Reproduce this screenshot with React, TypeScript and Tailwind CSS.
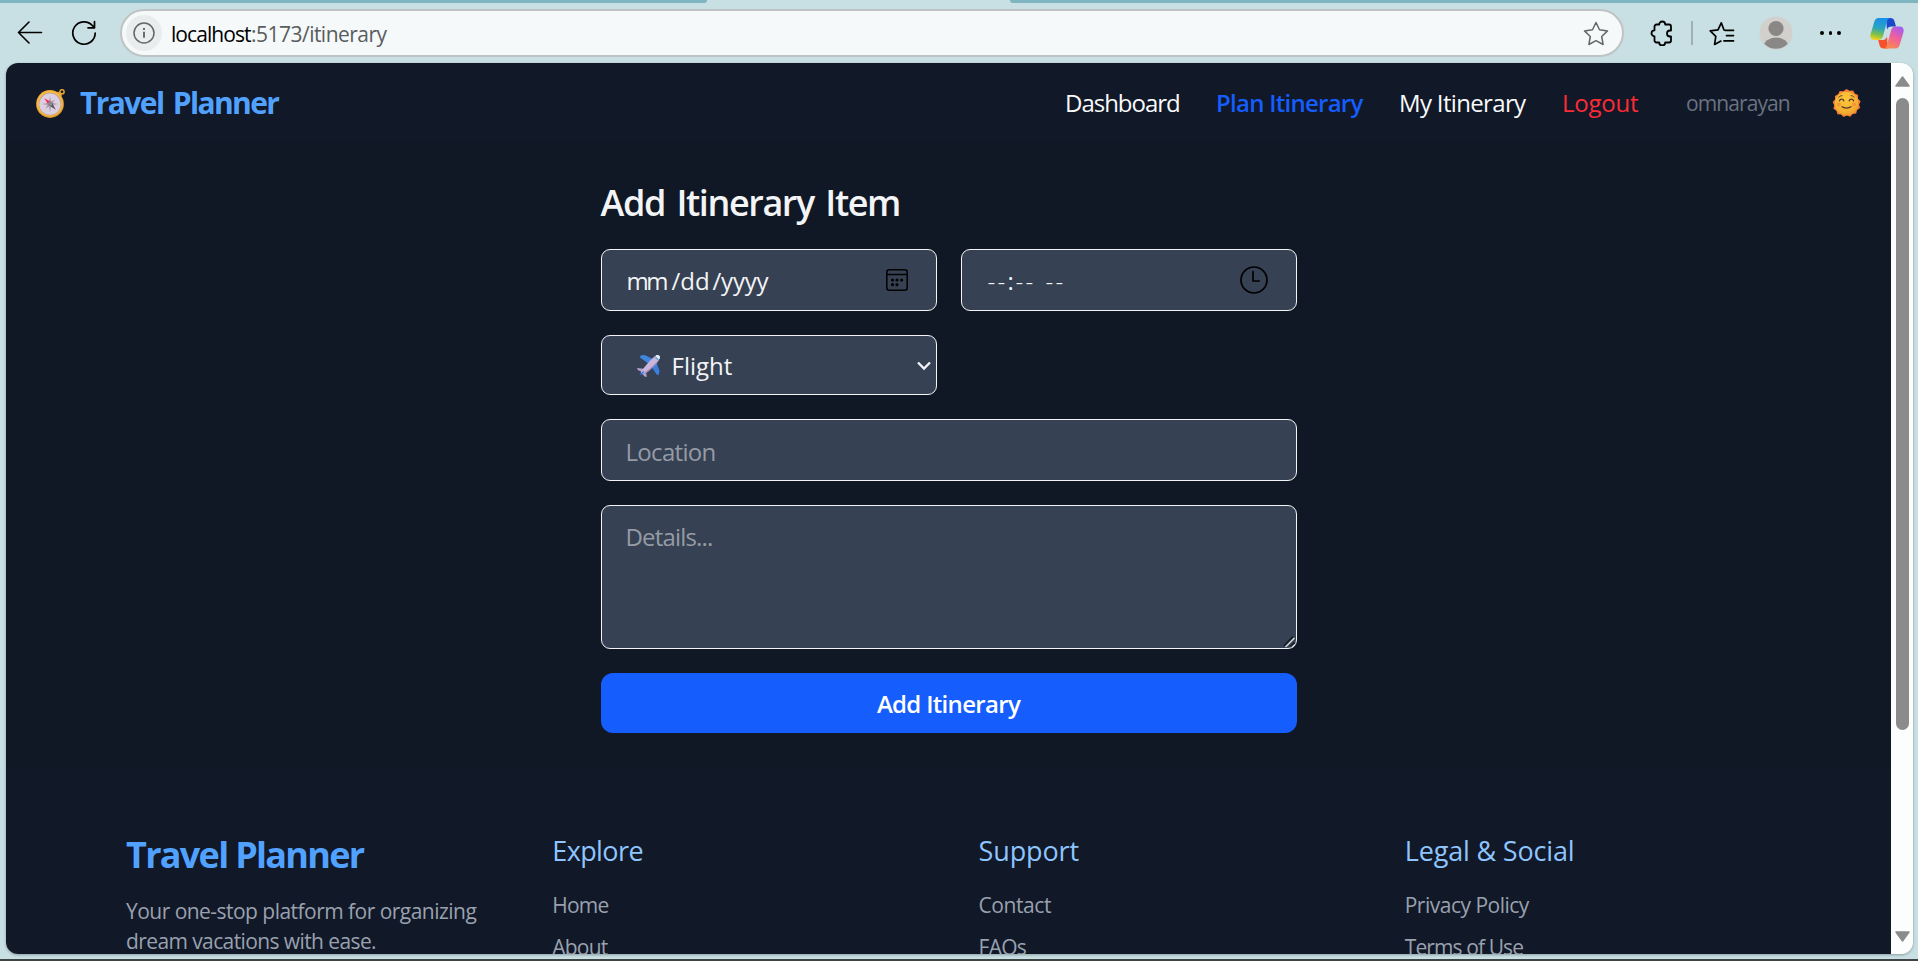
import type { ReactNode } from "react";

function Compass() {
  return (
    <svg viewBox="0 0 29 29" className="mt-px h-[29px] w-[29px] shrink-0">
      <circle cx="26" cy="2.8" r="2.1" fill="none" stroke="#e0a030" strokeWidth="1.6" />
      <path d="M22 4.5l2 2" stroke="#f3b93c" strokeWidth="3.4" strokeLinecap="round" />
      <circle cx="14" cy="15" r="13.9" fill="#e09a35" />
      <circle cx="13.8" cy="14.4" r="13" fill="#f6b93e" />
      <circle cx="14" cy="15" r="11.2" fill="#b9a0a8" />
      <circle cx="14" cy="15.2" r="10.6" fill="#dccfe0" />
      <path d="M14 7.2l1.3 6.5 6.7 1.3-6.7 1.3L14 23l-1.3-6.7L6 15l6.700-1.300z" fill="#a89daa" />
      <path d="M9.500 19.500l3-5.500 6.500-3.500-4 6z" fill="#a89daa" />
      <path d="M8.200 9.200l7.600 4-3 3z" fill="#ef2f62" />
      <path d="M19.800 20.800l-7-4.600 3-3z" fill="#5b525e" />
      <circle cx="14.200" cy="14.800" r="2.300" fill="#8d858f" />
    </svg>
  );
}

function SunFace() {
  return (
    <svg viewBox="0 0 29 29" className="mt-px h-[29px] w-[29px] shrink-0">
      <defs>
        <radialGradient id="sun" cx="0.45" cy="0.3" r="0.75">
          <stop offset="0" stopColor="#fcc83c" />
          <stop offset="0.7" stopColor="#f5b030" />
          <stop offset="1" stopColor="#e89a2c" />
        </radialGradient>
      </defs>
      <path
        d="M14.500 0l3 1.800 3.600-.4 1.700 3 3.300 1.600-.1 3.700 2.600 2.500-1.500 3.200 1 3.500-3 2 -.9 3.600-3.600.4-2.300 2.800-3.400-1.100-3.300 1.400-2.600-2.500-3.600-.3-1-3.500-3-1.900.9-3.500-1.700-3.200 2.500-2.600-.2-3.600 3.200-1.700 1.600-3.200 3.600.3z"
        fill="#f58038"
      />
      <circle cx="14.500" cy="14.500" r="11.800" fill="url(#sun)" />
      <circle cx="6.800" cy="15.500" r="2" fill="#f5933a" />
      <circle cx="22.200" cy="15.500" r="2" fill="#f5933a" />
      <g fill="none" stroke="#54382f" strokeWidth="1.300" strokeLinecap="round">
        <path d="M7.500 11.800c.7-2.200 3.600-2.200 4.300 0M17.200 11.800c.7-2.200 3.600-2.200 4.300 0M10 17.800c2.400 1.700 6.600 1.700 9 0" />
        <path d="M6.800 8.200c.8-1.100 2-1.600 3.200-1.500M19 6.700c1.200-.1 2.400.4 3.200 1.500" strokeWidth="1" />
      </g>
    </svg>
  );
}

function Plane() {
  return (
    <svg viewBox="0 0 24 24" className="h-6 w-6 shrink-0">
      <path d="M3.500 1.500l4-.5 9.500 4.500-5 4.500L3 3.500z" fill="#3f86e0" />
      <path d="M22.500 17l-.7 4-2.200-.5L14 12l5-5z" fill="#3a7ee0" />
      <path d="M0 14l6.500.8 2.500 2.700.8 5.500-2.800-.7-2-4.300L.8 16z" fill="#b79fce" />
      <path d="M19.300 1.200c2-.8 4.500.6 3.400 3.400-1.800 3.800-12 12.800-16.200 15.400-1.800.8-3.300-.6-2.400-2.400C7 13 15.800 3 19.300 1.200z" fill="#cbb5da" />
      <path d="M5.500 19.800c4.300-2.400 14-10.800 16.800-14.600-1.200 4.600-9.800 12-14.600 14.800z" fill="#a58fc0" />
      <path d="M2.800 20.300l3.500-3.400.8 1-3.400 3.400z" fill="#2775e8" />
      <path d="M19.300 1.200c2-.8 4.500.6 3.400 3.400l-1 .3-2.900-2.700z" fill="#e8eef6" />
      <path d="M18.600 2.600l2.900 2.800-1 .7-2.500-2.600z" fill="#35a5e8" />
    </svg>
  );
}

function Copilot() {
  return (
    <svg viewBox="0 0 34 31" className="h-[31px] w-[34px]">
      <defs>
        <linearGradient id="cpA" x1="0.5" y1="0" x2="0.3" y2="1">
          <stop offset="0" stopColor="#1a8fe8" />
          <stop offset="0.45" stopColor="#2aa5c0" />
          <stop offset="0.75" stopColor="#7cc04a" />
          <stop offset="1" stopColor="#f5d21c" />
        </linearGradient>
        <linearGradient id="cpB" x1="0.8" y1="0" x2="0.3" y2="1">
          <stop offset="0" stopColor="#a45cf5" />
          <stop offset="0.5" stopColor="#f0609a" />
          <stop offset="1" stopColor="#fb8a4e" />
        </linearGradient>
        <linearGradient id="cpC" x1="0" y1="0" x2="1" y2="1">
          <stop offset="0" stopColor="#1c50d8" />
          <stop offset="1" stopColor="#1a3fb8" />
        </linearGradient>
      </defs>
      <path d="M16 0h4.500c2 0 3.200 1 3.800 2.800L26 8.500h-4.500c-2.500 0-3.800 1.200-4.500 3.200z" fill="url(#cpC)" />
      <path d="M18 30.500h-4.500c-2 0-3.200-1-3.800-2.800L8.200 22H13c2 0 3.300-1.200 4-3.200z" fill="#f4512c" />
      <path d="M8.500 0H20c-1.800.4-2.500 1.800-3 3.600L13 18c-.8 2.800-2.200 4-4.800 4H4.500C1 22-.4 19.300.7 15.800L4.300 3.800C5 1.300 6.300 0 8.500 0z" fill="url(#cpA)" />
      <path d="M25.500 30.500H14c1.800-.4 2.500-1.800 3-3.600l4-14.400c.8-2.800 2.200-4 4.800-4h3.700c3.500 0 4.900 2.700 3.800 6.200l-3.600 12c-.7 2.500-2 3.800-4.200 3.800z" fill="url(#cpB)" />
    </svg>
  );
}

function Toolbar() {
  return (
    <header className="flex h-[60px] shrink-0 items-center bg-[#c8dfe3] pl-[17px]">
      <svg viewBox="0 0 26 24" className="h-6 w-[26px] shrink-0" fill="none" stroke="#000" strokeWidth="1.6" strokeLinecap="round" strokeLinejoin="round">
        <path d="M24.500 11.500H1.500M12 1L1.500 11.500 12 22" />
      </svg>
      <svg viewBox="0 0 26 26" className="ml-[28px] h-[26px] w-[26px] shrink-0" fill="none" stroke="#000" strokeWidth="1.700" strokeLinecap="round" strokeLinejoin="round">
        <path d="M24.200 13A11.200 11.200 0 1 1 21.500 5.700l2 2.100M23.500 1.500v6.300h-6.500" />
      </svg>
      <div className="ml-[23px] flex h-12 w-[1504px] shrink-0 items-center rounded-full border-2 border-[#bfc3c4] bg-[#f5f9fa] pl-[4px] pr-[13px]">
        <span className="flex h-9 w-9 items-center justify-center rounded-full bg-[#e9eded]">
          <svg viewBox="0 0 22 22" className="h-[22px] w-[22px]" fill="none" stroke="#666" strokeWidth="1.500">
            <circle cx="11" cy="11" r="10" />
            <path d="M11 9.800v6M11 6v2" strokeWidth="1.900" />
          </svg>
        </span>
        <span className="ml-[9px] flex pt-px text-[21px] leading-[30px]">
          <span className="w-[80px] tracking-[-0.93px] text-black">localhost</span>
          <span className="tracking-[-0.52px] text-[#5a5c5e]">:5173/itinerary</span>
        </span>
        <svg viewBox="0 0 26 25" className="ml-auto h-[25px] w-[26px]" fill="none" stroke="#666" strokeWidth="1.500" strokeLinejoin="round">
          <path d="M13 1.500l3.500 7.300 8 1.100-5.800 5.600 1.400 8L13 19.700l-7.100 3.800 1.400-8L1.500 9.900l8-1.100z" />
        </svg>
      </div>
      <svg viewBox="0 0 24 26" className="ml-[26px] h-[26px] w-6 shrink-0" fill="none" stroke="#000" strokeWidth="1.800" strokeLinejoin="round">
        <path d="M6.500 4.500h2.700a3 3 0 0 1 6 0H19a2 2 0 0 1 2 2v4h-1a3 3 0 0 0 0 6h1v4a2 2 0 0 1-2 2h-3.800a3 3 0 0 1-6 0H6.500a2 2 0 0 1-2-2v-4.200a3 3 0 0 1 0-6V6.500a2 2 0 0 1 2-2z" />
      </svg>
      <span className="ml-[17px] h-6 w-[2px] shrink-0 bg-[#9eb0b4]" />
      <svg viewBox="0 0 26 25" className="ml-[16px] h-[25px] w-[26px] shrink-0" fill="none" stroke="#000" strokeWidth="1.700" strokeLinecap="round" strokeLinejoin="round">
        <path d="M16.500 9.300l-1.500-.3L12.300 1.800 9 8.900 1.200 9.900l5.600 5.500L5.600 23.400l6.300-3.300M16.500 9.300h8M17.500 14.600h7M15 19.900h9.500" />
      </svg>
      <svg viewBox="0 0 34 34" className="ml-[24px] h-[34px] w-[34px] shrink-0">
        <clipPath id="avatar"><circle cx="17" cy="17" r="15.800" /></clipPath>
        <circle cx="17" cy="17" r="16.500" fill="#d2d0cd" />
        <g fill="#8a8886" clipPath="url(#avatar)">
          <circle cx="17" cy="12.500" r="7.600" />
          <ellipse cx="17" cy="31" rx="12.500" ry="9.500" />
        </g>
      </svg>
      <span className="ml-[27px] flex shrink-0 gap-[5px]">
        {[0, 1, 2].map((n) => (
          <i key={n} className="h-[3.500px] w-[3.500px] rounded-full bg-black" />
        ))}
      </span>
      <span className="ml-[29px] shrink-0">
        <Copilot />
      </span>
    </header>
  );
}

function Nav() {
  return (
    <nav className="flex h-[78px] shrink-0 items-center bg-[#111827] pl-[30px] pt-[2px] text-[24px] leading-9 text-[#f9fafb]">
      <Compass />
      <span className="ml-[15px] text-[30px] font-bold leading-[42px] tracking-[-1.600px] text-[#51a2ff] [word-spacing:3px]">Travel Planner</span>
      <div className="ml-auto flex items-center">
        <a className="w-[151px] tracking-[-1.020px]">Dashboard</a>
        <a className="w-[183px] font-semibold tracking-[-0.740px] text-[#155dfc]">Plan Itinerary</a>
        <a className="w-[163px] tracking-[-0.660px]">My Itinerary</a>
        <a className="w-[124px] tracking-[-0.230px] text-[#fb2c36]">Logout</a>
        <span className="w-[146px] text-[21px] tracking-[-0.900px] text-[#6a7282]">omnarayan</span>
      </div>
      <span className="mr-[30px]">
        <SunFace />
      </span>
    </nav>
  );
}

const field = "flex items-center whitespace-nowrap rounded-[9px] border border-[#f3f4f6] bg-[#364153] text-[24px] leading-9";

function ItineraryForm() {
  return (
    <main className="h-[628px] shrink-0 bg-[#101725] pt-[38px]">
      <form className="mx-auto w-[696px] text-[#f3f4f6]">
        <h2 className="h-[70px] text-[36px] font-semibold leading-[48px] tracking-[-1.400px] [word-spacing:3.500px]">Add Itinerary Item</h2>
        <div className="grid grid-cols-2 gap-6">
          <div className={`${field} h-[62px] pl-[25px] pr-[28px] pt-[2px]`}>
            <span className="flex">
              <span className="w-[45px] tracking-[-2.500px]">mm</span>
              <span className="w-[41px]">/dd</span>
              <span className="tracking-[-0.200px]">/yyyy</span>
            </span>
            <svg viewBox="0 0 22 22" className="mb-[3px] ml-auto h-[22px] w-[22px]" fill="none" stroke="#000" strokeWidth="1.500">
              <rect x="0.800" y="0.800" width="20.400" height="20.400" rx="2.500" />
              <path d="M1 5.500h20" />
              <g fill="#000" stroke="none">
                <circle cx="6.500" cy="11" r="1.600" />
                <circle cx="11" cy="11" r="1.600" />
                <circle cx="15.600" cy="11" r="1.600" />
                <circle cx="6.500" cy="15.700" r="1.600" />
                <circle cx="11" cy="15.700" r="1.600" />
              </g>
            </svg>
          </div>
          <div className={`${field} h-[62px] pl-[26px] pr-[28px] pt-[2px]`}>
            <span className="flex font-light">
              <span className="w-[20px] tracking-[2.300px]">--</span>
              <span className="w-[8px] font-normal">:</span>
              <span className="w-[30px] tracking-[2.300px]">--</span>
              <span className="tracking-[2.300px]">--</span>
            </span>
            <svg viewBox="0 0 28 28" className="mb-[2px] ml-auto h-7 w-7" fill="none" stroke="#000" strokeWidth="1.700">
              <circle cx="14" cy="14" r="13" />
              <path d="M13 5.500v9.500h6.200" strokeLinejoin="round" strokeLinecap="round" />
            </svg>
          </div>
          <div className={`${field} h-[60px] pl-[35px] pr-[4px] pt-[2px]`}>
            <Plane />
            <span className="ml-[11px]">Flight</span>
            <svg viewBox="0 0 16 10" className="ml-auto h-[10px] w-4" fill="none" stroke="#f3f4f6" strokeWidth="2.300">
              <path d="M2 1.500l6 6 6-6" />
            </svg>
          </div>
        </div>
        <input
          className="mt-6 block h-[62px] w-full rounded-[9px] border border-[#f3f4f6] bg-[#364153] px-6 pt-[2px] text-[24px] tracking-[-0.690px] placeholder:text-[#959ba4]"
          placeholder="Location"
        />
        <div className="relative mt-6 h-36">
          <textarea
            className="block h-full w-full resize-none rounded-[9px] border border-[#f3f4f6] bg-[#364153] px-6 pt-[13px] text-[24px] leading-9 tracking-[-0.830px] placeholder:text-[#959ba4]"
            placeholder="Details..."
          />
          <svg viewBox="0 0 13 13" className="absolute bottom-[1px] right-[1px] h-[13px] w-[13px]" fill="none">
            <path d="M1 11L10 1.500M7.500 11.500L11.500 7.500" stroke="#15191f" strokeWidth="1.500" />
            <path d="M2.500 12L11.500 3M9 12.500l3-3" stroke="#d5d8dc" strokeWidth="1.500" />
          </svg>
        </div>
        <button type="button" className="mt-6 block h-[60px] w-full rounded-xl bg-[#155dfc] pt-px text-center text-[24px] font-semibold tracking-[-0.680px] text-white">
          Add Itinerary
        </button>
      </form>
    </main>
  );
}

function Column({ title, children }: { title: ReactNode; children: ReactNode }) {
  return (
    <div>
      <h3 className="mb-[18px] text-[27px] leading-[42px] text-[#8ec5ff]">{title}</h3>
      <ul className="space-y-3">{children}</ul>
    </div>
  );
}

function Footer() {
  return (
    <footer className="grid shrink-0 grid-cols-4 gap-[60px] bg-[#111827] px-[120px] pt-[61px] text-[21px] leading-[30px] text-[#99a1af]">
      <div>
        <h2 className="mb-[17px] pt-px text-[36px] font-bold leading-[48px] tracking-[-1.700px] text-[#51a2ff]">Travel Planner</h2>
        <p className="whitespace-nowrap tracking-[-0.530px]">Your one-stop platform for organizing</p>
        <p className="whitespace-nowrap tracking-[-0.600px]">dream vacations with ease.</p>
      </div>
      <Column title={<span className="tracking-[-0.600px]">Explore</span>}>
        <li className="tracking-[-0.800px]">Home</li>
        <li className="tracking-[-0.780px]">About</li>
      </Column>
      <Column title={<span className="tracking-[-0.110px]">Support</span>}>
        <li className="tracking-[-0.410px]">Contact</li>
        <li className="tracking-[-0.700px]">FAQs</li>
      </Column>
      <Column title={<span className="tracking-[-0.170px]">Legal &amp; Social</span>}>
        <li className="tracking-[-0.510px]">Privacy Policy</li>
        <li className="tracking-[-0.900px]">Terms of Use</li>
      </Column>
    </footer>
  );
}

function Scrollbar() {
  return (
    <div className="flex w-[22px] shrink-0 flex-col items-center bg-[#fcfdfd] pb-3 pl-[3px] pr-[2px] pt-[13px]">
      <svg viewBox="0 0 15 11" className="h-[11px] w-[15px] shrink-0" fill="#8b8b8b" stroke="#8b8b8b" strokeLinejoin="round">
        <path d="M7.500 1L14 10H1z" strokeWidth="1.500" />
      </svg>
      <div className="mt-[11px] h-[632px] w-[13px] rounded-full bg-[#8b8b8b]" />
      <svg viewBox="0 0 15 11" className="mt-auto h-[11px] w-[15px] shrink-0" fill="#8b8b8b" stroke="#8b8b8b" strokeLinejoin="round">
        <path d="M7.500 10L1 1h13z" strokeWidth="1.500" />
      </svg>
    </div>
  );
}

export default function App() {
  return (
    <div className="flex h-[961px] w-[1918px] flex-col overflow-hidden bg-[#c8dfe3] font-['Open_Sans','Noto_Sans',sans-serif]">
      <div className="flex h-[3px] shrink-0 justify-between">
        <span className="w-[707px] rounded-br-[3px] bg-[#7fb5c0]" />
        <span className="w-[908px] rounded-bl-[3px] bg-[#7fb5c0]" />
      </div>
      <Toolbar />
      <div className="ml-[6px] flex h-[891px] w-[1907px] shrink-0 overflow-hidden rounded-xl shadow-[0_1px_3px_rgba(0,0,0,0.3)]">
        <div className="flex h-full w-[1885px] flex-col overflow-hidden">
          <Nav />
          <ItineraryForm />
          <Footer />
        </div>
        <Scrollbar />
      </div>
      <div className="mt-auto h-[2px] shrink-0 bg-[#3f4446]" />
    </div>
  );
}
